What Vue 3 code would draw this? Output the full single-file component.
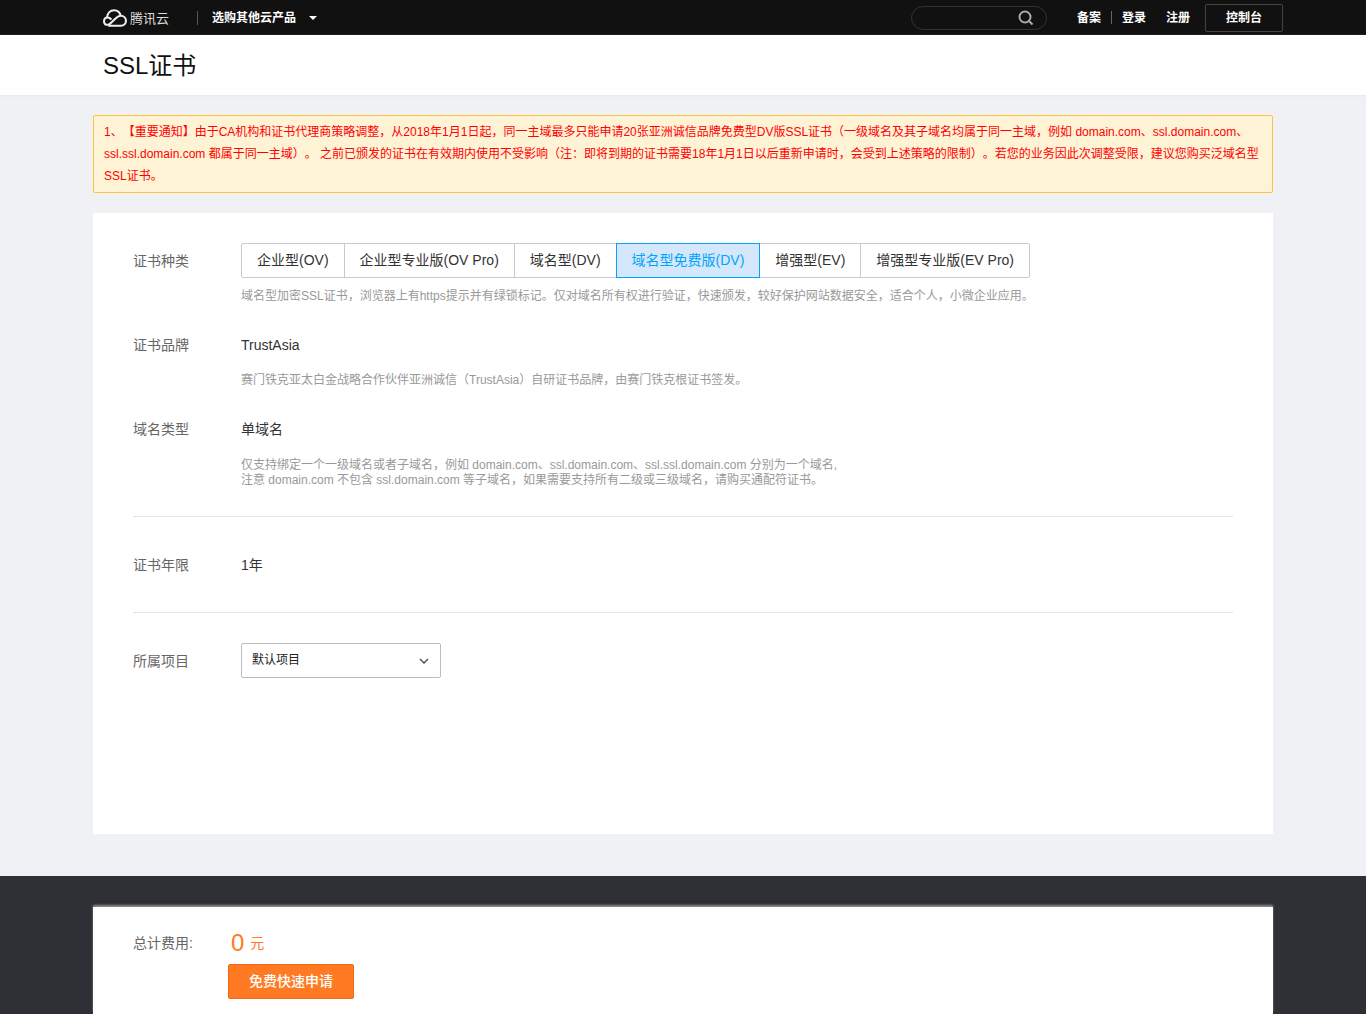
<script setup>
const certTypes = [
  { label: '企业型(OV)' },
  { label: '企业型专业版(OV Pro)' },
  { label: '域名型(DV)' },
  { label: '域名型免费版(DV)', active: true },
  { label: '增强型(EV)' },
  { label: '增强型专业版(EV Pro)' },
]
</script>

<template>
  <div class="page">
    <!-- Top nav -->
    <nav class="topbar">
      <div class="nav-left">
        <svg class="logo" width="24" height="18" viewBox="1 .5 23 17" fill="none" stroke="#eee" stroke-width="2">
          <path d="M6 16.500h12c3 0 5-2.100 5-4.800s-2.200-4.800-5-4.800c-1.900 0-3.200.9-4.700 2.400L8.200 14c-1 1-1.800 1.500-2.800 1.500-2 0-3.400-1.500-3.400-3.500s1.500-3.500 3.500-3.500c1.400 0 2.400.7 3.600 1.900" />
          <path d="M4.800 8.600C5.300 4.400 8 1.500 11.600 1.500c3.200 0 5.700 2.100 6.400 5.500" />
        </svg>
        <span class="brand">腾讯云</span>
        <i class="nav-sep"></i>
        <span class="nav-products">选购其他云产品</span>
        <i class="caret"></i>
      </div>
      <div class="nav-right">
        <div class="search">
          <svg width="16" height="16" viewBox="0 0 16 16" fill="none" stroke="#aaa" stroke-width="2">
            <circle cx="7" cy="7" r="5.500" />
            <path d="M11 11l3.500 3.500" />
          </svg>
        </div>
        <a class="nav-link first">备案</a>
        <i class="link-sep"></i>
        <a class="nav-link">登录</a>
        <a class="nav-link reg">注册</a>
        <a class="console">控制台</a>
      </div>
    </nav>

    <!-- Title -->
    <header class="title-bar">
      <h1>SSL证书</h1>
    </header>

    <main class="content">
      <div class="notice">
        1、【重要通知】由于CA机构和证书代理商策略调整，从2018年1月1日起，同一主域最多只能申请20张亚洲诚信品牌免费型DV版SSL证书（一级域名及其子域名均属于同一主域，例如 domain.com、ssl.domain.com、ssl.ssl.domain.com 都属于同一主域）。 之前已颁发的证书在有效期内使用不受影响（注：即将到期的证书需要18年1月1日以后重新申请时，会受到上述策略的限制）。若您的业务因此次调整受限，建议您购买泛域名型SSL证书。
      </div>

      <section class="card">
        <div class="row row-type">
          <label>证书种类</label>
          <div class="field">
            <div class="tabs">
              <button v-for="t in certTypes" :key="t.label" class="tab" :class="{ active: t.active }">{{ t.label }}</button>
            </div>
            <p class="hint">域名型加密SSL证书，浏览器上有https提示并有绿锁标记。仅对域名所有权进行验证，快速颁发，较好保护网站数据安全，适合个人，小微企业应用。</p>
          </div>
        </div>

        <div class="row row-brand">
          <label>证书品牌</label>
          <div class="field">
            <div class="value">TrustAsia</div>
            <p class="hint">赛门铁克亚太白金战略合作伙伴亚洲诚信（TrustAsia）自研证书品牌，由赛门铁克根证书签发。</p>
          </div>
        </div>

        <div class="row row-domain">
          <label>域名类型</label>
          <div class="field">
            <div class="value">单域名</div>
            <p class="hint tight">仅支持绑定一个一级域名或者子域名，例如 domain.com、ssl.domain.com、ssl.ssl.domain.com 分别为一个域名,<br />注意 domain.com 不包含 ssl.domain.com 等子域名，如果需要支持所有二级或三级域名，请购买通配符证书。</p>
          </div>
        </div>

        <div class="row row-year">
          <label>证书年限</label>
          <div class="field">
            <div class="value">1年</div>
          </div>
        </div>

        <div class="row row-project">
          <label>所属项目</label>
          <div class="select">
            <span>默认项目</span>
            <svg width="10" height="6" viewBox="0 0 10 6" fill="none" stroke="#444" stroke-width="1.300">
              <path d="M1 1l4 4 4-4" />
            </svg>
          </div>
        </div>
      </section>
    </main>

    <!-- Footer -->
    <footer class="footer">
      <div class="footer-card">
        <div class="total">
          <label>总计费用:</label>
          <span class="amount">0</span>
          <span class="unit">元</span>
        </div>
        <button class="apply">免费快速申请</button>
      </div>
    </footer>
  </div>
</template>

<style>
html,
body {
  margin: 0;
  overflow: hidden;
}
</style>

<style scoped>
.page {
  height: 1014px;
  overflow: hidden;
  background: #f0f1f5;
  color: #333;
  font-family: 'Liberation Sans', 'Noto Sans CJK SC', sans-serif;
  font-size: 14px;
  text-spacing-trim: space-all;
}

.topbar {
  height: 35px;
  background: #111;
  color: #fff;
  display: flex;
  justify-content: space-between;
  padding: 0 83px 0 103px;
}

.nav-left,
.nav-right {
  display: flex;
  align-items: center;
}

.logo {
  margin-right: 3px;
}

.brand {
  width: 39px;
  font-size: 13px;
  color: #ddd;
  padding-bottom: 1px;
}

.nav-sep {
  width: 1px;
  height: 14px;
  background: #555;
  margin: 0 14px 0 28px;
}

.nav-products {
  font-size: 12px;
  font-weight: 700;
  width: 85px;
  white-space: nowrap;
  padding-bottom: 2px;
}

.caret {
  margin-left: 12px;
  border: 4px solid transparent;
  border-top: 4px solid #fff;
  border-bottom: 0;
}

.search {
  width: 134px;
  height: 22px;
  border: 1px solid #333;
  border-radius: 12px;
  display: flex;
  align-items: center;
  justify-content: flex-end;
  margin-right: 30px;
}

.search svg {
  margin-right: 12px;
}

.nav-link {
  font-size: 12px;
  font-weight: 700;
  padding-bottom: 2px;
}

.link-sep {
  width: 1px;
  height: 13px;
  background: #666;
  margin: 0 10px;
}

.nav-link.reg {
  margin-left: 20px;
  margin-right: 15px;
}

.console {
  width: 76px;
  height: 24px;
  border: 1px solid #444;
  border-radius: 2px;
  font-size: 12px;
  font-weight: 700;
  display: flex;
  align-items: center;
  justify-content: center;
  padding-bottom: 2px;
}

.title-bar {
  height: 60px;
  box-sizing: border-box;
  background: #fff;
  padding: 0 0 3px 103px;
  display: flex;
  align-items: center;
  box-shadow: 0 1px 2px #e6e8ef;
}

.title-bar h1 {
  margin: 0;
  font-size: 24px;
  font-weight: 400;
  color: #111;
}

.content {
  padding: 20px 93px 0;
  height: 781px;
  box-sizing: border-box;
}

.notice {
  height: 78px;
  box-sizing: border-box;
  padding: 5px 10px;
  background: #fff3d6;
  border: 1px solid #ffc340;
  border-radius: 2px;
  color: #f00;
  font-size: 12px;
  line-height: 22px;
}

.card {
  margin-top: 20px;
  height: 621px;
  box-sizing: border-box;
  background: #fff;
  padding: 30px 40px 0;
}

.row {
  display: flex;
}

.row label {
  width: 108px;
  flex: none;
  color: #666;
  font-size: 14px;
  line-height: 20px;
}

.row-type label {
  padding-top: 8px;
}

.tabs {
  display: flex;
}

.tab {
  height: 35px;
  padding: 0 15px 4px;
  margin: 0 0 0 -1px;
  background: #fff;
  border: 1px solid #c8cad3;
  font-family: inherit;
  font-size: 14px;
  color: #333;
  white-space: nowrap;
}

.tab:first-child {
  margin-left: 0;
  border-radius: 2px 0 0 2px;
}

.tab:last-child {
  border-radius: 0 2px 2px 0;
}

.tab.active {
  position: relative;
  background: #d5e7fb;
  border-color: #00a4ff;
  color: #00a4ff;
}

.hint {
  margin: 9px 0 0;
  color: #999;
  font-size: 12px;
  line-height: 18px;
}

.hint.tight {
  line-height: 15px;
}

.value {
  color: #333;
  line-height: 20px;
}

.row-brand {
  margin-top: 30px;
}

.row-brand .hint {
  margin-top: 16px;
}

.row-domain {
  margin-top: 30px;
  padding-bottom: 28px;
  border-bottom: 1px solid #e5e5e5;
}

.row-domain .hint {
  margin-top: 19px;
}

.row-year {
  padding: 38px 0 37px;
  border-bottom: 1px solid #e5e5e5;
}

.row-project {
  margin-top: 30px;
}

.row-project label {
  padding-top: 8px;
}

.select {
  width: 200px;
  height: 35px;
  box-sizing: border-box;
  border: 1px solid #bbbcc5;
  border-radius: 2px;
  display: flex;
  align-items: center;
  justify-content: space-between;
  padding: 0 11px 0 10px;
  font-size: 12px;
  color: #222;
}

.select span {
  padding-bottom: 5px;
}

.footer {
  height: 138px;
  background: #2f3035;
  padding: 31px 93px 0;
  box-sizing: border-box;
}

.footer-card {
  height: 107px;
  background: #fff;
  padding: 21px 40px 0;
  box-sizing: border-box;
  box-shadow: 0 -2px 2px rgba(200, 200, 205, 0.6);
}

.total {
  display: flex;
  align-items: center;
  height: 30px;
}

.total label {
  width: 98px;
  color: #666;
  font-size: 14px;
  line-height: 20px;
}

.amount {
  color: #ff7a22;
  font-size: 24px;
  line-height: 30px;
  margin-right: 6px;
}

.unit {
  color: #ff7a22;
  font-size: 14px;
  line-height: 20px;
}

.apply {
  display: block;
  margin: 6px 0 0 95px;
  width: 126px;
  height: 35px;
  padding: 0 0 4px;
  background: #ff7a22;
  border: 1px solid #f26a10;
  border-radius: 2px;
  color: #fff;
  font-family: inherit;
  font-size: 14px;
  font-weight: 500;
}
</style>
